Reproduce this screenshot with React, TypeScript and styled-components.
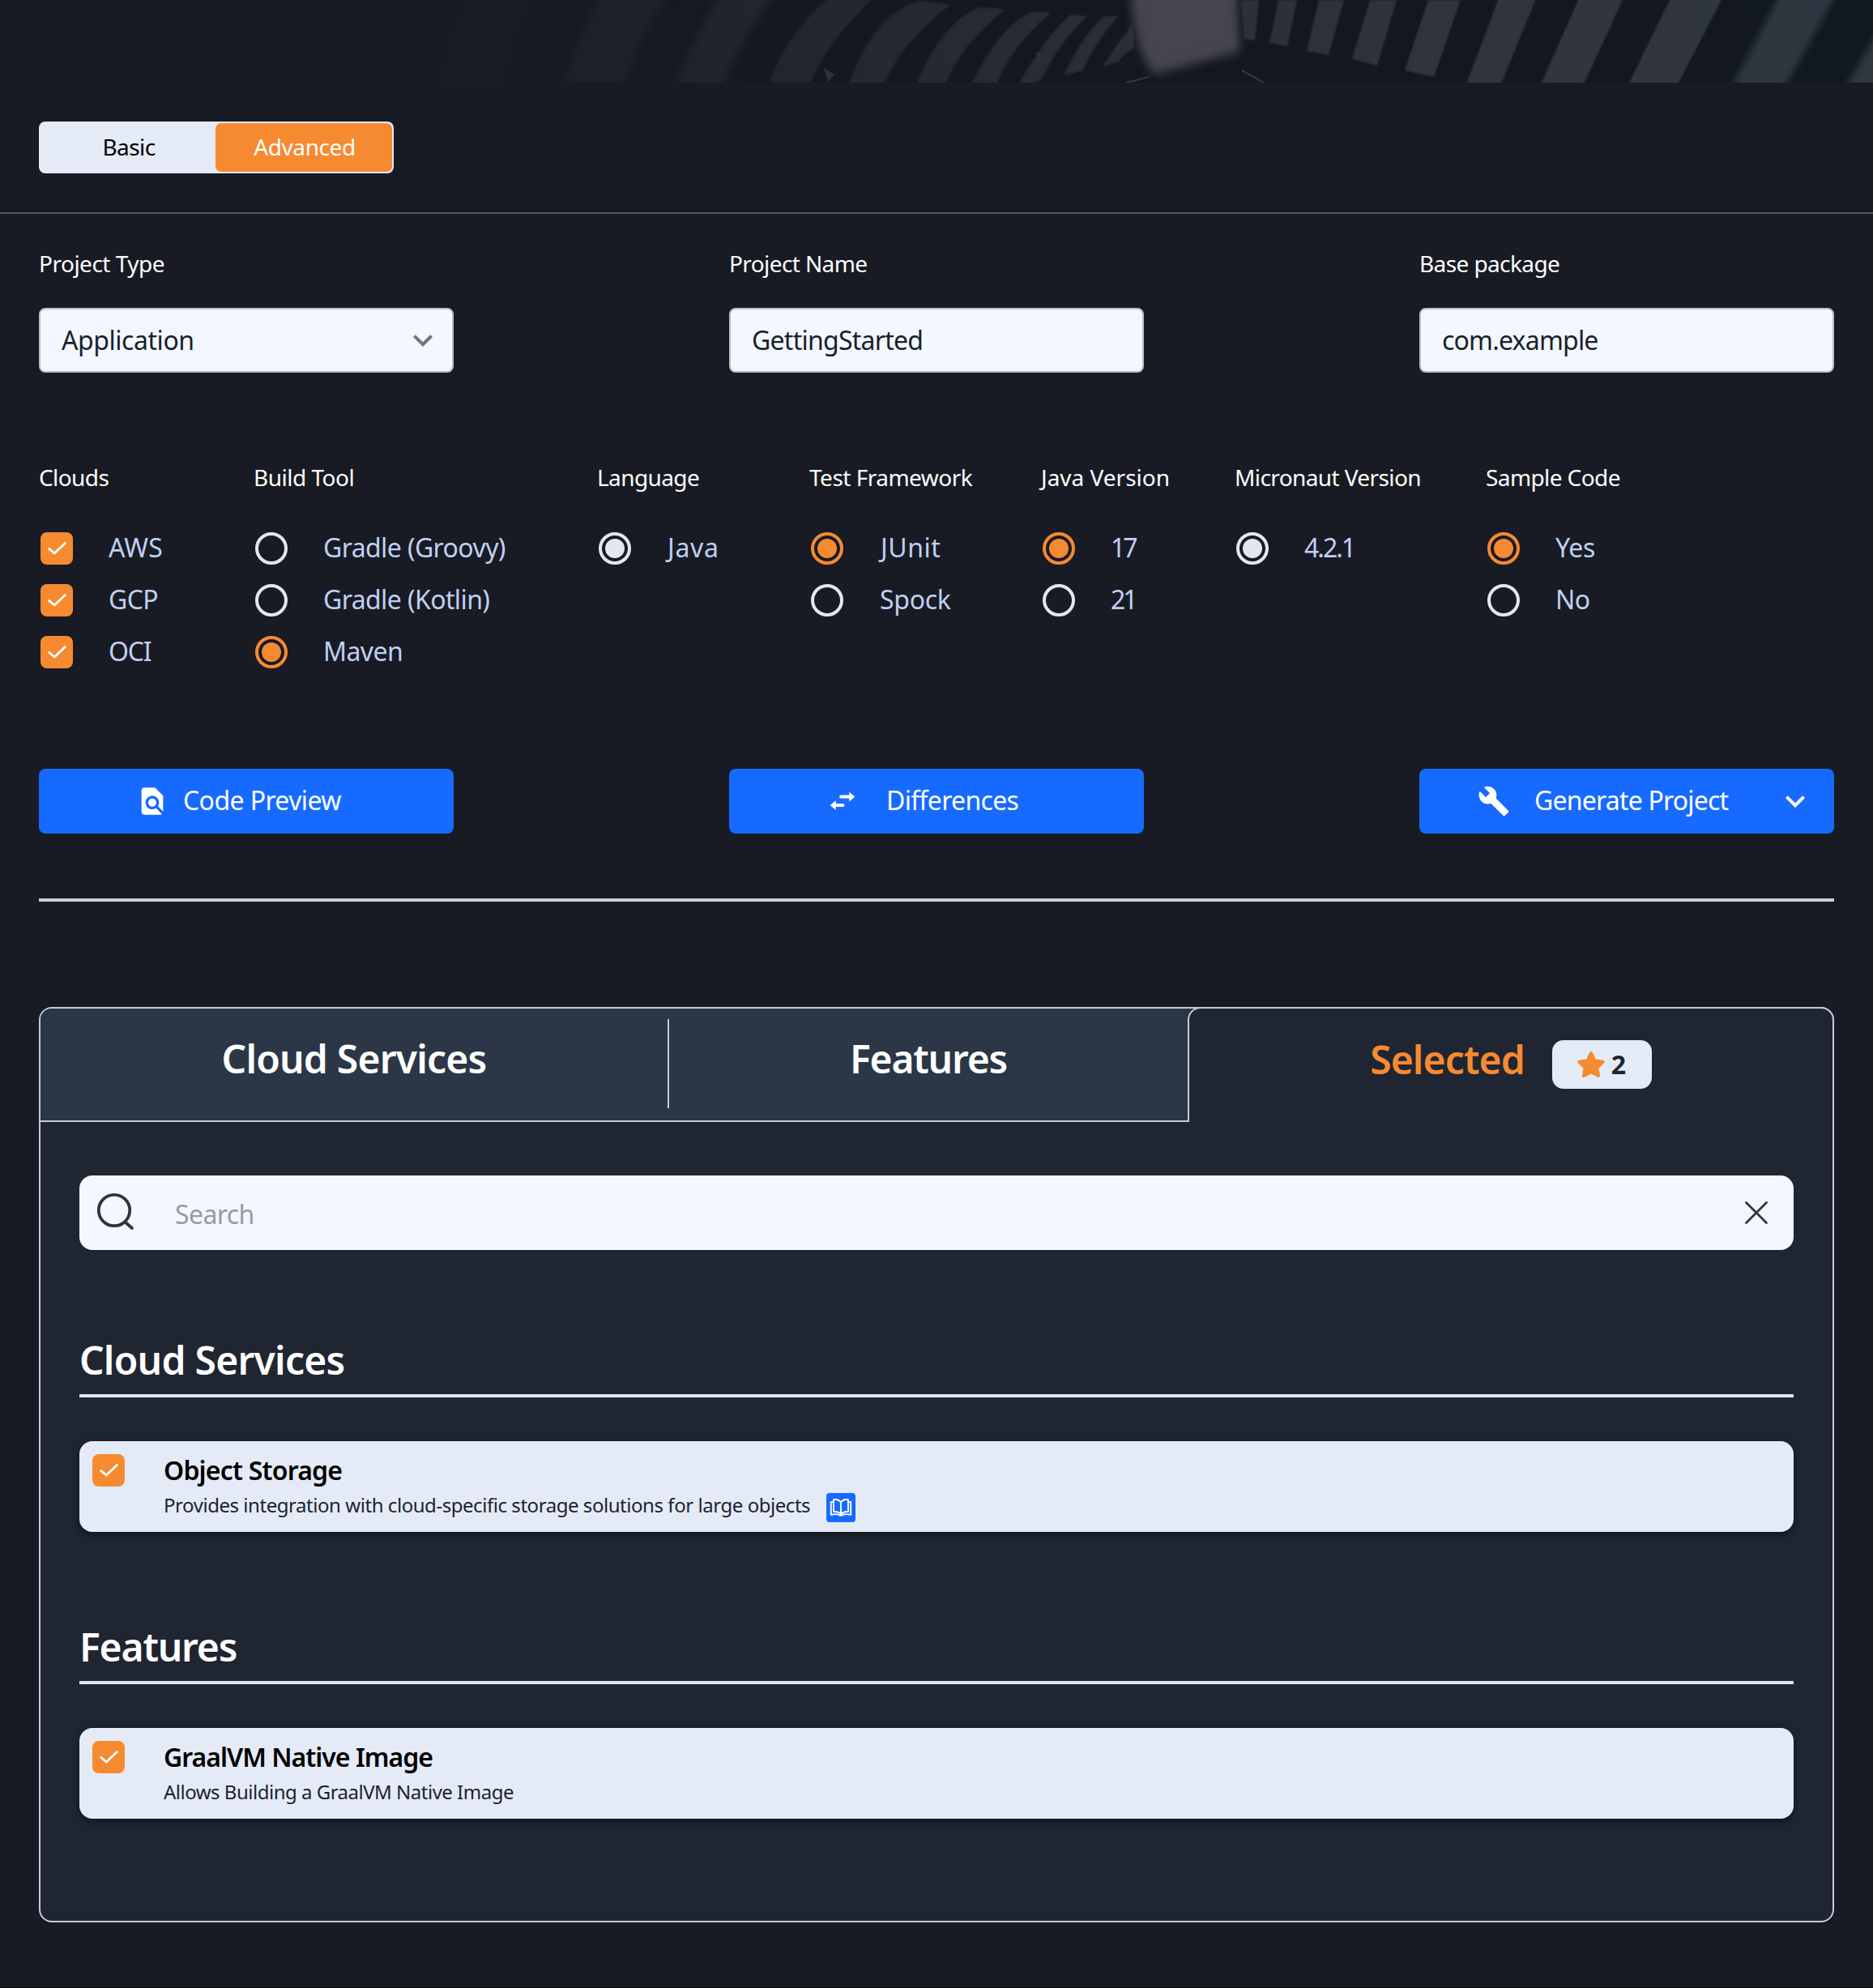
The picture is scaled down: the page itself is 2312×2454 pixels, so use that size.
import React, { useState } from "react";
import styled, { createGlobalStyle, css } from "styled-components";

const color = {
  page: "#181b24",
  panel: "#1f2631",
  tab: "#2b3747",
  border: "#c2cbdb",
  field: "#f3f7ff",
  card: "#e4ebf7",
  orange: "#f68a31",
  blue: "#176aff",
  ink: "#1b1f2b",
  option: "#c1cff0",
};

const GlobalStyle = createGlobalStyle`
  *, *::before, *::after { box-sizing: border-box; }
  html, body { margin: 0; padding: 0; background: ${color.page}; }
  body { font-family: "Noto Sans", "Open Sans", sans-serif; color: #fff; }
  button, input { font-family: inherit; }
  svg { display: block; flex: none; }
`;

const tracked = css<{ $track?: number }>`
  letter-spacing: ${(p) => p.$track ?? -0.6}px;
`;

const Page = styled.div`
  width: 2312px;
  height: 2454px;
  display: flex;
  flex-direction: column;
  background: ${color.page};
  border-bottom: 1px solid #07080b;
  overflow: hidden;
`;

const Banner = styled.header`
  height: 102px;
  flex: none;
  overflow: hidden;
  background: linear-gradient(90deg, #171b23 0%, #171a24 30%, #151823 45%, #131722 65%, #121822 100%);
`;

const ModeBar = styled.div`
  padding: 48px;
  border-bottom: 2px solid #565553;
`;

const Toggle = styled.div`
  display: grid;
  grid-template-columns: 216px 218px;
  width: 438px;
  height: 64px;
  padding: 2px;
  border-radius: 8px;
  background: ${color.card};
`;

const ToggleOption = styled.button<{ $active?: boolean; $track?: number }>`
  border: 0;
  padding: 0 0 2px 2px;
  border-radius: 7px;
  font-size: 28px;
  line-height: 40px;
  background: ${(p) => (p.$active ? color.orange : "transparent")};
  color: ${(p) => (p.$active ? "#fff" : "#000")};
  ${tracked}
`;

const Main = styled.main`
  display: flex;
  flex-direction: column;
  padding: 41px 48px 0;
`;

const SpreadRow = styled.div`
  display: flex;
  justify-content: space-between;
`;

const Field = styled.label`
  display: flex;
  flex-direction: column;
  width: 512px;
  gap: 35px;
`;

const Label = styled.span<{ $track?: number }>`
  font-size: 28px;
  line-height: 40px;
  white-space: nowrap;
  ${tracked}
`;

const Control = styled.div<{ $track?: number }>`
  display: flex;
  align-items: center;
  justify-content: space-between;
  height: 80px;
  padding: 0 12px 0 26px;
  border: 2px solid #bbbec6;
  border-radius: 8px;
  background: ${color.field};
  color: ${color.ink};
  font-size: 32px;
  line-height: 40px;
  ${tracked}
`;

const ControlText = styled.span`
  padding-bottom: 1px;
`;

const OptionGrid = styled.div`
  display: grid;
  grid-template-columns: 265px 424px 262px 286px 239px 310px 1fr;
  height: 256px;
  margin-top: 109px;
`;

const OptionGroup = styled.div`
  display: flex;
  flex-direction: column;
`;

const OptionList = styled.div`
  display: flex;
  flex-direction: column;
  gap: 24px;
  margin-top: 48px;
`;

const OptionRow = styled.div`
  display: flex;
  align-items: flex-start;
  height: 40px;
  gap: 44px;
  padding-left: 2px;
`;

const OptionText = styled.span<{ $track?: number; $indent?: number }>`
  font-size: 32px;
  line-height: 38px;
  padding-left: ${(p) => p.$indent ?? 0}px;
  color: ${color.option};
  white-space: nowrap;
  ${tracked}
`;

const Radio = styled.span<{ $tone: "off" | "on" | "locked" }>`
  display: flex;
  align-items: center;
  justify-content: center;
  flex: none;
  width: 40px;
  height: 40px;
  border-radius: 50%;
  border: 4px solid ${(p) => (p.$tone === "on" ? color.orange : "#e3e7f0")};
  &::after {
    content: "";
    width: 24px;
    height: 24px;
    border-radius: 50%;
    background: ${(p) =>
      p.$tone === "on" ? color.orange : p.$tone === "locked" ? "#e3e7f0" : "transparent"};
  }
`;

const CheckBox = styled.span`
  display: block;
  flex: none;
  width: 40px;
  height: 40px;
  border-radius: 8px;
  background: ${color.orange};
`;

const Actions = styled(SpreadRow)`
  margin-top: 124px;
`;

const ActionButton = styled.button`
  display: flex;
  align-items: center;
  width: 512px;
  height: 80px;
  padding: 0;
  border: 0;
  border-radius: 8px;
  background: ${color.blue};
  color: #fff;
`;

const IconSlot = styled.span<{ $left: number; $gap: number }>`
  display: block;
  margin-left: ${(p) => p.$left}px;
  margin-right: ${(p) => p.$gap}px;
`;

const ActionText = styled.span<{ $track?: number }>`
  font-size: 32px;
  line-height: 40px;
  padding-bottom: 3px;
  white-space: nowrap;
  ${tracked}
`;

const CaretSlot = styled.span`
  margin-left: auto;
  margin-right: 24px;
`;

const Rule = styled.div`
  height: 4px;
  margin-top: 80px;
  background: #c9cdd6;
`;

const Panel = styled.section`
  height: 1130px;
  margin-top: 130px;
  border: 2px solid ${color.border};
  border-radius: 16px;
  background: ${color.panel};
`;

const TabBar = styled.div`
  display: flex;
  height: 140px;
  border-radius: 14px 14px 0 0;
  background: ${color.tab};
`;

const IdleTabs = styled.div`
  display: flex;
  width: 1416px;
  border-bottom: 2px solid ${color.border};
`;

const Tab = styled.div<{ $width: number }>`
  display: flex;
  justify-content: center;
  width: ${(p) => p.$width}px;
  padding-top: 30px;
`;

const TabDivider = styled.span`
  width: 2px;
  height: 110px;
  margin-top: 13px;
  background: ${color.border};
`;

const ActiveTab = styled.div`
  display: flex;
  flex: 1;
  justify-content: center;
  margin: -2px -2px 0 0;
  padding-top: 31px;
  border: 2px solid ${color.border};
  border-bottom: 0;
  border-radius: 16px 16px 0 0;
  background: ${color.panel};
  color: ${color.orange};
`;

const Title = styled.h2<{ $track?: number }>`
  margin: 0;
  font-size: 48px;
  line-height: 64px;
  font-weight: 600;
  white-space: nowrap;
  ${tracked}
`;

const Badge = styled.span`
  display: flex;
  align-items: center;
  width: 123px;
  height: 60px;
  margin: 8px 0 0 34px;
  padding-left: 31px;
  gap: 8px;
  border-radius: 14px;
  background: ${color.card};
  color: #1e2633;
  font-size: 32px;
  line-height: 40px;
  font-weight: 700;
`;

const PanelBody = styled.div`
  padding: 66px 48px 0;
`;

const SearchBox = styled.div`
  display: flex;
  align-items: center;
  height: 92px;
  padding: 0 32px 0 22px;
  border-radius: 16px;
  background: ${color.field};
`;

const SearchInput = styled.input`
  flex: 1;
  margin-left: 50px;
  padding: 3px 0 0;
  border: 0;
  outline: 0;
  background: transparent;
  font-size: 32px;
  line-height: 40px;
  letter-spacing: -0.6px;
  &::placeholder {
    color: #979ba5;
    opacity: 1;
  }
`;

const Group = styled.section<{ $space: number }>`
  margin-top: ${(p) => p.$space}px;
`;

const GroupHead = styled.div`
  padding-bottom: 10px;
  border-bottom: 4px solid #e2e7ef;
`;

const Card = styled.article`
  display: flex;
  align-items: flex-start;
  gap: 48px;
  height: 112px;
  margin-top: 54px;
  padding: 16px;
  border-radius: 16px;
  background: ${color.card};
  box-shadow: 0 3px 8px rgba(0, 0, 0, 0.5);
`;

const CardText = styled.div`
  padding-top: 2px;
`;

const CardTitle = styled.div<{ $track?: number }>`
  font-size: 32px;
  line-height: 36px;
  font-weight: 600;
  color: #000;
  ${tracked}
`;

const CardLine = styled.div`
  display: flex;
  align-items: flex-start;
  gap: 20px;
  margin-top: 9px;
`;

const CardDetail = styled.span<{ $track?: number }>`
  font-size: 24px;
  line-height: 32px;
  color: #1e2230;
  white-space: nowrap;
  ${tracked}
`;

const DocLink = styled.span`
  display: flex;
  align-items: center;
  justify-content: center;
  width: 36px;
  height: 36px;
  margin-top: 1px;
  border-radius: 4px;
  background: ${color.blue};
`;

function Check() {
  return (
    <CheckBox>
      <svg width="40" height="40" viewBox="0 0 40 40" fill="none">
        <path d="M10.6 20.4 17.2 26 30.4 13.4" stroke="#fff" strokeWidth="2.8" strokeLinecap="round" strokeLinejoin="round" />
      </svg>
    </CheckBox>
  );
}

function Caret({ fill }: { fill: string }) {
  return (
    <svg width="48" height="48" viewBox="0 0 24 24" fill={fill}>
      <path d="M7.41 8.59 12 13.17l4.59-4.58L18 10l-6 6-6-6z" />
    </svg>
  );
}

function FindInPage() {
  return (
    <svg width="40" height="40" viewBox="0 0 24 24" fill="#fff">
      <path d="M20 19.59V8l-6-6H6c-1.1 0-1.99.9-1.99 2L4 20c0 1.1.89 2 1.99 2H18c.45 0 .85-.15 1.19-.4l-4.43-4.43c-.8.52-1.74.83-2.76.83-2.76 0-5-2.24-5-5s2.24-5 5-5 5 2.24 5 5c0 1.02-.31 1.96-.83 2.75L20 19.59zM9 13c0 1.66 1.34 3 3 3s3-1.34 3-3-1.34-3-3-3-3 1.34-3 3z" />
    </svg>
  );
}

function CompareArrows() {
  return (
    <svg width="40" height="40" viewBox="0 0 40 40" fill="none">
      <path d="M18 14.5H30M20.5 25H9" stroke="#fff" strokeWidth="3.8" strokeLinecap="round" />
      <path d="M28.5 9.2 35 14.5l-6.5 5.3zM11.5 19.7 5 25l6.5 5.3z" fill="#fff" stroke="#fff" strokeWidth="0.6" strokeLinejoin="round" />
    </svg>
  );
}

function Wrench() {
  return (
    <svg width="40" height="40" viewBox="0 0 24 24" fill="#fff">
      <path d="M22.7 19l-9.1-9.1c.9-2.3.4-5-1.5-6.9-2-2-5-2.4-7.4-1.3L9 6 6 9 1.6 4.7C.4 7.1.9 10.1 2.9 12.1c1.9 1.9 4.6 2.4 6.9 1.5l9.1 9.1c.4.4 1 .4 1.4 0l2.3-2.3c.5-.4.5-1.1.1-1.4z" />
    </svg>
  );
}

function Star() {
  return (
    <svg width="34" height="32" viewBox="20 0 536 512" fill={color.orange}>
      <path d="M259.3 17.8L194 150.200 47.900 171.500c-26.200 3.800-36.700 36.100-17.700 54.600l105.700 103-25 145.500c-4.500 26.300 23.200 46 46.400 33.700L288 439.600l130.700 68.700c23.200 12.200 50.900-7.400 46.400-33.700l-25-145.500 105.700-103c19-18.500 8.500-50.800-17.700-54.600L382 150.200 316.700 17.800c-11.700-23.600-45.600-23.900-57.400 0z" />
    </svg>
  );
}

function Magnifier() {
  return (
    <svg width="46" height="50" viewBox="0 0 46 50" fill="none" stroke="#2d3446" strokeWidth="3.8" strokeLinecap="round">
      <circle cx="21" cy="22" r="19.2" />
      <path d="M35 37 43 44" />
    </svg>
  );
}

function Cross() {
  return (
    <svg width="28" height="28" viewBox="0 0 28 28" stroke="#2d3446" strokeWidth="2.8" strokeLinecap="round">
      <path d="M1.5 1.5 26.5 26.5M26.5 1.5 1.5 26.5" />
    </svg>
  );
}

function OpenBook() {
  return (
    <svg width="28" height="24" viewBox="0 0 28 24" fill="none" stroke="#fff" strokeWidth="1.9" strokeLinejoin="round" strokeLinecap="round">
      <path d="M14 5.5C12.3 2.8 8.6 1.6 5 2.2V17c3.6-.3 7 .7 9 3.2 2-2.5 5.4-3.5 9-3.2V2.2c-3.6-.6-7.3.6-9 3.3z" />
      <path d="M14 5.5v14.5" />
      <path d="M5 5H1.8v15.8c3.8-.9 7.8-.9 10.4.4.5.8 3.1.8 3.6 0 2.6-1.3 6.6-1.3 10.4-.4V5H23" />
    </svg>
  );
}

function BannerArt() {
  return (
    <svg width="2312" height="102" viewBox="0 0 2312 102">
      <defs>
        <linearGradient id="slat" gradientUnits="userSpaceOnUse" x1="500" y1="0" x2="2312" y2="0">
          <stop offset="0" stopColor="#1a1d26" />
          <stop offset="0.16" stopColor="#1f212b" />
          <stop offset="0.32" stopColor="#252731" />
          <stop offset="0.46" stopColor="#2a2c36" />
          <stop offset="0.7" stopColor="#30343f" />
          <stop offset="1" stopColor="#303741" />
        </linearGradient>
        <filter id="soft1" x="-20%" y="-20%" width="140%" height="140%" colorInterpolationFilters="sRGB"><feGaussianBlur stdDeviation="1" /></filter>
        <filter id="soft3" x="-30%" y="-30%" width="160%" height="160%" colorInterpolationFilters="sRGB"><feGaussianBlur stdDeviation="4" /></filter>
        <filter id="soft6" x="-30%" y="-30%" width="160%" height="160%" colorInterpolationFilters="sRGB"><feGaussianBlur stdDeviation="6" /></filter>
      </defs>
      <g fill="url(#slat)">
        <g filter="url(#soft6)">
          <path d="M580-20H665Q630 50 620 122H530Q545 50 580-20z" opacity="0.5" />
          <path d="M748-20H832Q780 60 766 122H690Q710 50 748-20z" />
        </g>
        <g filter="url(#soft3)">
          <path d="M898-20H966Q905 60 887 122H828Q850 50 898-20z" />
        </g>
        <g filter="url(#soft1)">
          <path d="M1021 0H1076Q1020 55 1000 104H949Q970 45 1021 0z" transform="translate(0 -1)" />
          <path d="M1134 1Q1152 2 1173 6Q1115 50 1091 104H1048Q1078 18 1134 1z" />
          <path d="M1206 10Q1222 8 1241 12Q1190 50 1167 104H1131Q1160 32 1206 10z" />
          <path d="M1272 15Q1282 14 1297 16Q1250 55 1230 104H1199Q1233 34 1272 15z" />
          <path d="M1322 18 1342 20Q1305 55 1286 98L1272 104H1257Q1294 40 1322 18z" />
          <path d="M1363 20H1380Q1350 55 1337 87L1313 93Q1335 45 1363 20z" />
          <path d="M1398 30 1400 60Q1388 65 1381 76L1361 82Q1378 55 1398 30z" />
          <path d="M1532 0H1554L1549 50 1536 48z" />
          <path d="M1578 0H1601L1589 57 1567 53z" />
          <path d="M1628 0H1659L1640 68 1613 63z" />
          <path d="M1691 0H1724L1700 81 1669 73z" />
          <path d="M1763 0H1803L1770 95 1734 87z" />
          <path d="M1850-2H1896L1853 104H1810z" />
          <path d="M1949-2H2004L1955 104H1902z" />
          <path d="M2062-2H2126L2071 104H2010z" />
        </g>
        <g filter="url(#soft3)">
          <path d="M2204-20H2274L2195 122H2130z" />
          <path d="M2340 0 2270 122H2390z" />
        </g>
      </g>
      <path d="M1396-30H1526L1530 64 1424 92Q1394 50 1396-30z" fill="#45444d" filter="url(#soft6)" />
      <path d="M1404-30H1518L1522 54 1428 80Q1406 40 1404-30z" fill="#46454e" filter="url(#soft3)" />
      <path d="M1017 84 1030 92 1022 102z" fill="#2d2f39" />
      <path d="M1279 65 1285 70 1280 76" fill="none" stroke="#34363f" strokeWidth="2" />
      <path d="M1533 87 1562 103M1390 102 1418 95" stroke="#363842" strokeWidth="2" fill="none" />
    </svg>
  );
}

type Option = {
  text: string;
  state: "check" | "off" | "on" | "locked";
  track?: number;
  indent?: number;
};

const groups: { label: string; track?: number; options: Option[] }[] = [
  { label: "Clouds", options: [
    { text: "AWS", state: "check", track: 0.1 },
    { text: "GCP", state: "check" },
    { text: "OCI", state: "check", track: -1.2 },
  ] },
  { label: "Build Tool", track: -0.5, options: [
    { text: "Gradle (Groovy)", state: "off" },
    { text: "Gradle (Kotlin)", state: "off" },
    { text: "Maven", state: "on" },
  ] },
  { label: "Language", options: [{ text: "Java", state: "locked", track: 0.7, indent: 1 }] },
  { label: "Test Framework", track: -0.5, options: [
    { text: "JUnit", state: "on", track: 0.5, indent: 2 },
    { text: "Spock", state: "off", track: -0.3, indent: 1 },
  ] },
  { label: "Java Version", track: 0, options: [
    { text: "17", state: "on", track: -3 },
    { text: "21", state: "off", track: -3 },
  ] },
  { label: "Micronaut Version", options: [{ text: "4.2.1", state: "locked", track: -2 }] },
  { label: "Sample Code", options: [
    { text: "Yes", state: "on", track: -0.3 },
    { text: "No", state: "off" },
  ] },
];

export default function App() {
  const [query, setQuery] = useState("");
  return (
    <Page>
      <GlobalStyle />
      <Banner><BannerArt /></Banner>
      <ModeBar>
        <Toggle>
          <ToggleOption>Basic</ToggleOption>
          <ToggleOption $active $track={-0.4}>Advanced</ToggleOption>
        </Toggle>
      </ModeBar>
      <Main>
        <SpreadRow>
          <Field>
            <Label $track={-0.5}>Project Type</Label>
            <Control $track={-0.45}><ControlText>Application</ControlText><Caret fill="#727479" /></Control>
          </Field>
          <Field>
            <Label>Project Name</Label>
            <Control $track={-0.75}><ControlText>GettingStarted</ControlText></Control>
          </Field>
          <Field>
            <Label>Base package</Label>
            <Control $track={-0.8}><ControlText>com.example</ControlText></Control>
          </Field>
        </SpreadRow>

        <OptionGrid>
          {groups.map((g) => (
            <OptionGroup key={g.label}>
              <Label $track={g.track}>{g.label}</Label>
              <OptionList>
                {g.options.map((o) => (
                  <OptionRow key={o.text}>
                    {o.state === "check" ? <Check /> : <Radio $tone={o.state} />}
                    <OptionText $track={o.track} $indent={o.indent}>{o.text}</OptionText>
                  </OptionRow>
                ))}
              </OptionList>
            </OptionGroup>
          ))}
        </OptionGrid>

        <Actions>
          <ActionButton>
            <IconSlot $left={120} $gap={18}><FindInPage /></IconSlot>
            <ActionText>Code Preview</ActionText>
          </ActionButton>
          <ActionButton>
            <IconSlot $left={120} $gap={34}><CompareArrows /></IconSlot>
            <ActionText $track={-0.7}>Differences</ActionText>
          </ActionButton>
          <ActionButton>
            <IconSlot $left={72} $gap={30}><Wrench /></IconSlot>
            <ActionText $track={-0.8}>Generate Project</ActionText>
            <CaretSlot><Caret fill="#fff" /></CaretSlot>
          </ActionButton>
        </Actions>

        <Rule />

        <Panel>
          <TabBar>
            <IdleTabs>
              <Tab $width={774}><Title $track={-0.8}>Cloud Services</Title></Tab>
              <TabDivider />
              <Tab $width={640}><Title $track={-1.2}>Features</Title></Tab>
            </IdleTabs>
            <ActiveTab>
              <Title $track={-0.9}>Selected</Title>
              <Badge><Star />2</Badge>
            </ActiveTab>
          </TabBar>
          <PanelBody>
            <SearchBox>
              <Magnifier />
              <SearchInput placeholder="Search" value={query} onChange={(e) => setQuery(e.target.value)} />
              <Cross />
            </SearchBox>
            <Group $space={104}>
              <GroupHead><Title $track={-0.75}>Cloud Services</Title></GroupHead>
              <Card>
                <Check />
                <CardText>
                  <CardTitle $track={-0.8}>Object Storage</CardTitle>
                  <CardLine>
                    <CardDetail $track={-0.45}>Provides integration with cloud-specific storage solutions for large objects</CardDetail>
                    <DocLink><OpenBook /></DocLink>
                  </CardLine>
                </CardText>
              </Card>
            </Group>
            <Group $space={110}>
              <GroupHead><Title $track={-1.2}>Features</Title></GroupHead>
              <Card>
                <Check />
                <CardText>
                  <CardTitle $track={-1}>GraalVM Native Image</CardTitle>
                  <CardLine>
                    <CardDetail $track={-0.5}>Allows Building a GraalVM Native Image</CardDetail>
                  </CardLine>
                </CardText>
              </Card>
            </Group>
          </PanelBody>
        </Panel>
      </Main>
    </Page>
  );
}
